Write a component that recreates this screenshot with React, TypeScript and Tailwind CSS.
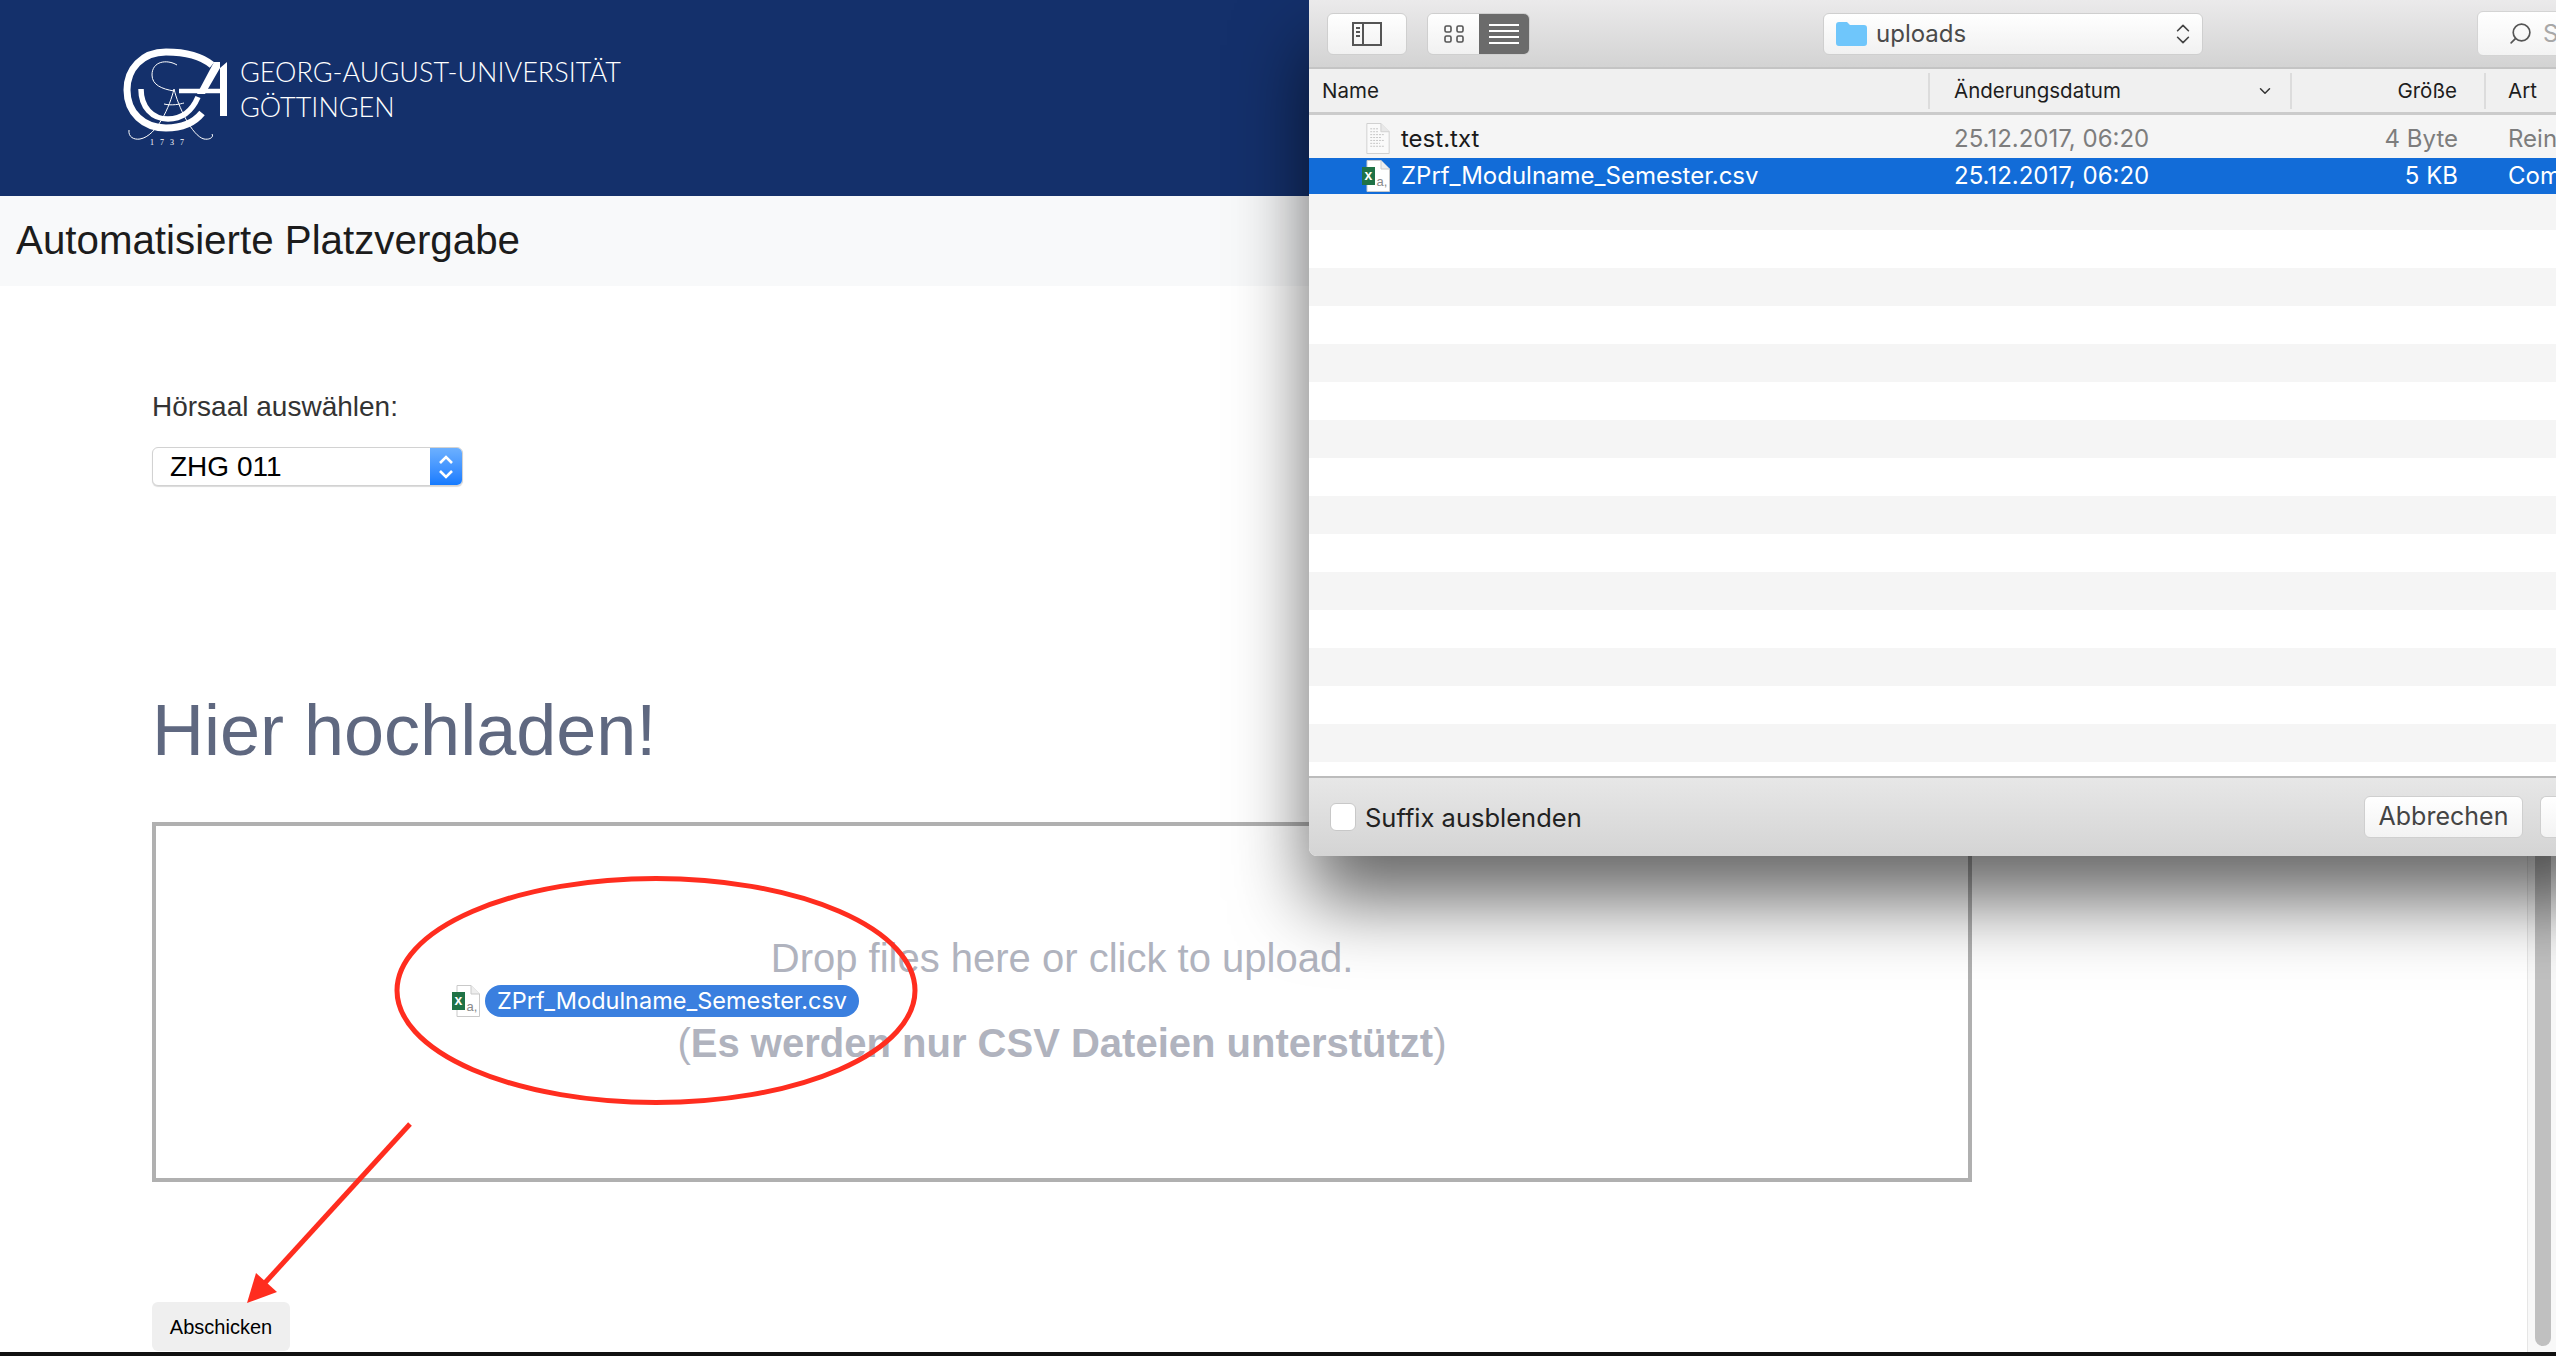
import React from 'react';
import { ChevronDown, ChevronsUpDown, Search } from 'lucide-react';

/** University seal: the big G, the A and the fine script initials above the year. */
const SealLogo: React.FC = () => (
    <svg width="105" height="99" viewBox="20 17 105 99" fill="none" stroke="white" className="shrink-0">
        <path d="M110 34 C98 24 82 21 64 21 C40 21 25 38 25 59 C25 82 42 97 64 97 C80 97 92 92 100 82" strokeWidth="7" />
        <path d="M39 58 C39 76 50 88 66 88 C80 88 90 80 96 66" strokeWidth="5.5" />
        <path d="M77 60 H118" strokeWidth="4.5" />
        <path d="M118 31 H125 V85 H118 Z M125 31 H112 L95 63 H103 L118 37 Z" fill="white" stroke="none" />
        <path d="M75 34 C65 28 50 30 50 44 C50 54 60 58 72 60" strokeWidth="1" />
        <path d="M72 58 C68 75 55 105 38 108 C32 109 26 106 27 99 M72 58 C76 75 90 105 102 108 C108 109 112 106 110 103" strokeWidth="1" />
        <path d="M62 73 C70 75 78 73 82 72" strokeWidth="1" />
        <text x="48" y="114" fill="white" stroke="none" fontSize="8" letterSpacing="6" fontFamily="Liberation Serif, serif">1737</text>
    </svg>
);

/** Spreadsheet document icon with the green X tab. */
const ExcelIcon: React.FC<{ className?: string }> = ({ className }) => (
    <svg viewBox="0 0 28 32" className={className}>
        <path d="M5 .5 H19 L27.5 9 V31.5 H5 Z" fill="white" stroke="#c9c9c9" />
        <path d="M19 .5 V9 H27.5" fill="#eeeeee" stroke="#c9c9c9" />
        <rect x="0" y="7" width="13" height="18" fill="#1f7246" />
        <text x="6.5" y="20" fill="white" fontSize="14" fontWeight="700" textAnchor="middle" fontFamily="Liberation Sans, sans-serif">x</text>
        <text x="20" y="26" fill="#8a8a8a" fontSize="13" textAnchor="middle" fontFamily="Liberation Sans, sans-serif">a,</text>
    </svg>
);

const TextFileIcon: React.FC = () => (
    <svg viewBox="0 0 24 32" className="h-[31px] w-[24px]">
        <path d="M.5 .5 H15 L23.5 9 V31.5 H.5 Z" fill="#fafafa" stroke="#cfcfcf" />
        <path d="M15 .5 V9 H23.5" fill="#e8e8e8" stroke="#cfcfcf" />
        <path d="M4 6 H12 M4 9 H12 M4 12 H19 M4 15 H16 M4 18 H19 M4 21 H14 M4 24 H18" stroke="#c4c4c4" strokeWidth="1" strokeDasharray="2 1" />
    </svg>
);

const headerCell = 'flex items-center h-[36px] border-r-2 border-[#dcdcdc]';

const FileDialog: React.FC = () => {
    const stripes = [false, true, false, true, false, true, false, true, false, true, false, true, false, true, false];

    return (
        <div className="absolute left-[1309px] top-0 z-20 h-[856px] w-[1300px] rounded-bl-lg bg-white shadow-[0_45px_75px_rgba(0,0,0,0.6)]">
            <div className="flex h-full w-[1247px] flex-col overflow-hidden rounded-bl-lg font-['Inter',sans-serif]">
                {/* Toolbar */}
                <div className="relative flex h-[69px] shrink-0 items-center border-b-2 border-[#c4c4c4] bg-gradient-to-b from-[#ebeaeb] to-[#d3d3d3] pl-[18px]">
                    <div className="flex h-[42px] w-[80px] shrink-0 items-center justify-center rounded-md border border-[#cfcfcf] bg-gradient-to-b from-white to-[#f1f1f1]">
                        <svg width="30" height="24" viewBox="0 0 30 24" fill="none" stroke="#555" strokeWidth="2">
                            <rect x="1" y="1" width="28" height="22" />
                            <path d="M11 1 V23 M4 6 H8 M4 10 H8 M4 14 H8" />
                        </svg>
                    </div>
                    <div className="ml-[20px] flex h-[42px] w-[103px] shrink-0 overflow-hidden rounded-md border border-[#cfcfcf]">
                        <div className="flex w-[51px] items-center justify-center bg-gradient-to-b from-white to-[#f1f1f1]">
                            <svg width="20" height="20" viewBox="0 0 20 20" fill="none" stroke="#555" strokeWidth="1.6">
                                <rect x="1" y="2" width="6" height="6" rx="1.5" />
                                <rect x="13" y="2" width="6" height="6" rx="1.5" />
                                <rect x="1" y="12" width="6" height="6" rx="1.5" />
                                <rect x="13" y="12" width="6" height="6" rx="1.5" />
                            </svg>
                        </div>
                        <div className="flex flex-1 items-center justify-center bg-[#6b6b6b]">
                            <svg width="30" height="22" viewBox="0 0 30 22" stroke="white" strokeWidth="2">
                                <path d="M0 2 H30 M0 8 H30 M0 14 H30 M0 20 H30" />
                            </svg>
                        </div>
                    </div>
                    <div className="ml-[293px] flex h-[42px] w-[380px] shrink-0 items-center rounded-md border border-[#cfcfcf] bg-gradient-to-b from-white to-[#f1f1f1] pl-[12px] pr-[6px]">
                        <svg width="31" height="24" viewBox="0 0 31 24">
                            <path d="M0 3 Q0 0 3 0 H11 L14 3 H28 Q31 3 31 6 V21 Q31 24 28 24 H3 Q0 24 0 21 Z" fill="#6fc6fb" />
                        </svg>
                        <span className="ml-[9px] flex-1 text-[24px] text-[#4a4a4a]">uploads</span>
                        <ChevronsUpDown size={26} strokeWidth={1.5} className="text-[#444]" />
                    </div>
                    <div className="ml-[274px] flex h-[45px] w-[120px] shrink-0 items-center rounded-md border border-[#d4d4d4] bg-gradient-to-b from-white to-[#f3f3f3] pl-[30px]">
                        <Search size={25} strokeWidth={1.6} className="shrink-0 -scale-x-100 text-[#555]" />
                        <span className="ml-[10px] text-[24px] text-[#a8a8a8]">Suchen</span>
                    </div>
                </div>

                {/* Column headers */}
                <div className="grid h-[46px] shrink-0 grid-cols-[621px_362px_194px_1fr] items-center border-b-[3px] border-[#cbcbcb] bg-[#f0f0f0] pt-[1px] text-[20.5px] text-[#1d1d1d]">
                    <div className={`${headerCell} pl-[13px]`}>Name</div>
                    <div className={`${headerCell} justify-between pl-[24px] pr-[16px]`}>
                        <span>Änderungsdatum</span>
                        <ChevronDown size={18} className="text-[#333]" />
                    </div>
                    <div className={`${headerCell} justify-end pr-[27px]`}>Größe</div>
                    <div className="pl-[22px]">Art</div>
                </div>

                {/* File rows */}
                <div className="flex-1 overflow-hidden">
                    <div className="grid h-[43px] grid-cols-[621px_362px_194px_1fr] items-center bg-[#f5f5f5] pt-[4px] text-[24px]">
                        <div className="flex items-center pl-[57px] text-[#1a1a1a]">
                            <TextFileIcon />
                            <span className="ml-[11px]">test.txt</span>
                        </div>
                        <div className="pl-[24px] text-[#7d7d7d]">25.12.2017, 06:20</div>
                        <div className="pr-[28px] text-right text-[#7d7d7d]">4 Byte</div>
                        <div className="whitespace-nowrap pl-[22px] text-[#7d7d7d]">Reiner Text</div>
                    </div>
                    <div className="grid h-[36px] grid-cols-[621px_362px_194px_1fr] items-center bg-[#126cd8] text-[24px] text-white">
                        <div className="flex items-center pl-[53px]">
                            <ExcelIcon className="h-[32px] w-[28px]" />
                            <span className="ml-[11px]">ZPrf_Modulname_Semester.csv</span>
                        </div>
                        <div className="pl-[24px]">25.12.2017, 06:20</div>
                        <div className="pr-[28px] text-right">5 KB</div>
                        <div className="whitespace-nowrap pl-[22px]">Comma Separated</div>
                    </div>
                    <div className="h-[36px] bg-[#f5f5f5]" />
                    {stripes.map((gray, i) => (
                        <div key={i} className={`h-[38px] ${gray ? 'bg-[#f5f5f5]' : 'bg-white'}`} />
                    ))}
                </div>

                {/* Footer */}
                <div className="flex h-[80px] shrink-0 items-center border-t-2 border-[#bcbcbc] bg-gradient-to-b from-[#e7e7e7] to-[#d4d4d4] pl-[21px]">
                    <div className="h-[28px] w-[26px] rounded-md border border-[#c8c8c8] bg-white" />
                    <span className="ml-[9px] flex-1 pt-[2px] text-[25.5px] text-[#222]">Suffix ausblenden</span>
                    <div className="flex h-[42px] w-[159px] shrink-0 items-center justify-center rounded-md border border-[#cfcfcf] bg-gradient-to-b from-white to-[#f3f3f3] text-[25px] text-[#444]">
                        Abbrechen
                    </div>
                    <div className="ml-[17px] h-[42px] w-[16px] shrink-0 rounded-l-md border border-r-0 border-[#cfcfcf] bg-gradient-to-b from-white to-[#f3f3f3]" />
                </div>
            </div>
        </div>
    );
};

export default function App() {
    return (
        <div className="relative flex h-[1356px] w-[2556px] flex-col overflow-hidden bg-white font-['Liberation_Sans',Arial,sans-serif]">
            <header className="flex h-[196px] shrink-0 items-start gap-[13px] bg-[#14306b] pl-[122px] pt-[48px] text-white">
                <SealLogo />
                <div className="pt-[6px] font-['Lato',sans-serif] text-[27px] font-light leading-[35px]">
                    <div>GEORG-AUGUST-UNIVERSITÄT</div>
                    <div>GÖTTINGEN</div>
                </div>
            </header>
            <div className="flex h-[90px] shrink-0 items-center bg-[#f8f9fa] pl-[16px] text-[40.3px] text-[#1c1c1c]">
                Automatisierte Platzvergabe
            </div>

            <div className="flex flex-1">
                <main className="flex-1 pl-[152px]">
                    <div className="mt-[105px] text-[28px] leading-[32px] text-[#333]">Hörsaal auswählen:</div>
                    <div className="mt-[24px] flex h-[39px] w-[311px] items-stretch overflow-hidden rounded-md border border-[#d2d2d2] bg-white shadow-[0_1px_1px_rgba(0,0,0,0.15)]">
                        <span className="flex flex-1 items-center pl-[17px] text-[28px] text-black">ZHG 011</span>
                        <span className="flex w-[32px] items-center justify-center bg-gradient-to-b from-[#6cb0ff] to-[#147bff]">
                            <svg width="16" height="28" viewBox="0 0 16 28" fill="none" stroke="white" strokeWidth="2.6">
                                <path d="M2 10 L8 4 L14 10 M2 18 L8 24 L14 18" />
                            </svg>
                        </span>
                    </div>
                    <h1 className="mt-[204px] text-[72px] font-normal leading-[80px] text-[#5f6880]">Hier hochladen!</h1>
                    <div className="mt-[52px] flex h-[360px] w-[1820px] flex-col items-center justify-center border-4 border-[#b0b0b0] pb-[4px] text-[#b0b3be]">
                        <p className="text-[40px] leading-[44px]">Drop files here or click to upload.</p>
                        <p className="mt-[41px] text-[40px] leading-[44px]">
                            (<b>Es werden nur CSV Dateien unterstützt</b>)
                        </p>
                    </div>
                    <button className="mt-[120px] h-[49px] w-[138px] rounded-md bg-[#efefef] text-[20px] text-black">Abschicken</button>
                </main>

                {/* Page scrollbar, mostly hidden behind the dialog */}
                <div className="flex w-[29px] shrink-0 border-l border-[#e6e6e6] bg-[#f8f8f8] pl-[7px] pr-[5px]">
                    <div className="mb-[6px] flex-1 rounded-b-lg bg-[#c0c0c0]" />
                </div>
            </div>
            <div className="h-[4px] shrink-0 bg-[#111]" />

            <FileDialog />

            {/* Dragged file ghost */}
            <div className="absolute left-[452px] top-[985px] z-10 flex items-center">
                <ExcelIcon className="h-[32px] w-[28px]" />
                <span className="ml-[5px] flex h-[32px] w-[374px] items-center justify-center rounded-full bg-[#3a7fdf] font-['Inter',sans-serif] text-[23.5px] text-white">
                    ZPrf_Modulname_Semester.csv
                </span>
            </div>

            {/* Red annotations drawn on top of the screenshot */}
            <svg className="pointer-events-none absolute inset-0 z-10" width="2556" height="1356" fill="none">
                <ellipse cx="656" cy="990.5" rx="259" ry="112" stroke="#ff2d1f" strokeWidth="5" />
                <path d="M410 1124 L262 1286" stroke="#ff2d1f" strokeWidth="5" />
                <path d="M247 1303 L256 1273 L277 1292 Z" fill="#ff2d1f" />
            </svg>
        </div>
    );
}
